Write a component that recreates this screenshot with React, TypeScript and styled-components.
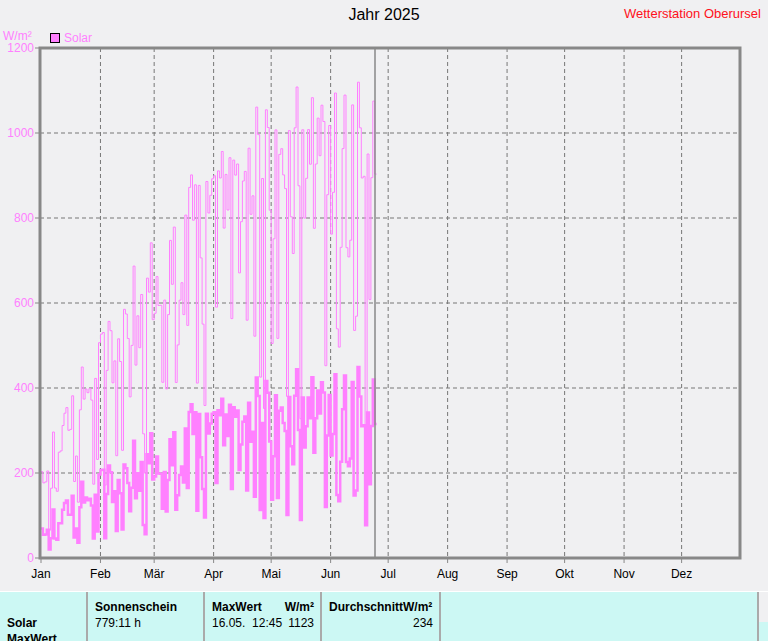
import React from 'react'
import styled, { createGlobalStyle } from 'styled-components'

const GlobalStyle = createGlobalStyle`
  html, body { margin: 0; padding: 0; background: #f0f0f2; }
  body { font-family: "Liberation Sans", Arial, sans-serif; }
`

const FONT = '"Liberation Sans", Arial, sans-serif'
const L = 40
const R = 740
const T = 48
const B = 558
const PX_DAY = 1.918
const yOf = (v: number) => B - (v / 1200) * (B - T)
const xOf = (d: number) => 41 + d * PX_DAY

const months = ['Jan', 'Feb', 'Mär', 'Apr', 'Mai', 'Jun', 'Jul', 'Aug', 'Sep', 'Okt', 'Nov', 'Dez']
const monthStart = [0, 31, 59, 90, 120, 151, 181, 212, 243, 273, 304, 334]

// deterministic pseudo random
function rng(seed: number) {
  let s = seed
  return () => {
    s = (s * 16807) % 2147483647
    return (s - 1) / 2147483646
  }
}

function buildSeries() {
  const r = rng(20250624)
  const max: number[] = []
  const avg: number[] = []
  for (let d = 0; d <= 174; d++) {
    const env = 260 + 860 * Math.sin(Math.min(1, d / 145) * Math.PI / 2)
    const cloud = r()
    const m = env * (0.12 + 0.88 * Math.pow(cloud, 0.4))
    max.push(Math.min(1123, m))
    const a = (env / 1120) * 450 * (0.15 + 0.85 * Math.pow(cloud, 0.7))
    avg.push(Math.max(18, Math.min(452, a)))
  }
  return { max, avg }
}

function stepPath(vals: number[]) {
  let p = ''
  vals.forEach((v, i) => {
    const x = xOf(i).toFixed(1)
    const y = yOf(v).toFixed(1)
    p += i === 0 ? `M${x} ${y}` : `L${x} ${y}`
    p += `L${xOf(i + 1).toFixed(1)} ${y}`
  })
  return p
}

const { max, avg } = buildSeries()

export default function App() {
  return (
    <Page>
      <GlobalStyle />
      <Header>
        <Title>Jahr 2025</Title>
        <Station>Wetterstation Oberursel</Station>
      </Header>
      <svg width={768} height={560} viewBox="0 30 768 560" style={{ display: 'block' }}>
        <text x={3} y={40} fill="#ff80ff" fontSize={12} fontFamily={FONT}>W/m²</text>
        <rect x={50.5} y={33.5} width={9} height={9} fill="#ff80ff" stroke="#000" strokeWidth={1} />
        <text x={64} y={42} fill="#ff80ff" fontSize={12} fontFamily={FONT}>Solar</text>
        {[200, 400, 600, 800, 1000].map(v => (
          <line key={v} x1={L} x2={R} y1={yOf(v)} y2={yOf(v)} stroke="#777" strokeDasharray="4 3" />
        ))}
        {monthStart.slice(1).map(d => (
          <line key={d} x1={xOf(d)} x2={xOf(d)} y1={T} y2={B} stroke="#777" strokeDasharray="4 3" />
        ))}
        {[0, 200, 400, 600, 800, 1000, 1200].map(v => (
          <g key={v}>
            <text x={34} y={yOf(v) + 4} textAnchor="end" fill="#ff80ff" fontSize={12} fontFamily={FONT}>{v}</text>
            <line x1={35} x2={40} y1={yOf(v)} y2={yOf(v)} stroke="#888" />
          </g>
        ))}
        {months.map((m, i) => (
          <g key={m}>
            <line x1={xOf(monthStart[i])} x2={xOf(monthStart[i])} y1={B} y2={B + 5} stroke="#888" />
            <text x={xOf(monthStart[i])} y={578} textAnchor="middle" fill="#000" fontSize={12} fontFamily={FONT}>{m}</text>
          </g>
        ))}
        <path d={stepPath(max)} fill="none" stroke="#ff80ff" strokeWidth={1} />
        <path d={stepPath(avg)} fill="none" stroke="#ff80ff" strokeWidth={2.5} />
        <line x1={375} x2={375} y1={T} y2={B} stroke="#888" strokeWidth={1.5} />
        <path d={`M${L} ${T}H${R}V${B}H${L}Z`} fill="none" stroke="#888" strokeWidth={3} />
      </svg>
      <Table>
        <Cell $w={88}>
          <Head>&nbsp;</Head>
          <Head>Solar</Head>
          <Head>MaxWert</Head>
        </Cell>
        <Cell $w={117}>
          <Head>Sonnenschein</Head>
          <div>779:11 h</div>
        </Cell>
        <Cell $w={117}>
          <Split><Head>MaxWert</Head><Head>W/m²</Head></Split>
          <Split><span>16.05.&nbsp;&nbsp;12:45</span><span>1123</span></Split>
        </Cell>
        <Cell $w={119}>
          <Split><Head>DurchschnittW/m²</Head></Split>
          <Split><span /><span>234</span></Split>
        </Cell>
        <Cell $w={318} />
        <Tail />
      </Table>
    </Page>
  )
}

const Page = styled.div`
  width: 768px;
  height: 641px;
  overflow: hidden;
`

const Header = styled.div`
  position: relative;
  height: 30px;
`

const Title = styled.div`
  text-align: center;
  font-size: 16px;
  padding-top: 6px;
  color: #000;
`

const Station = styled.div`
  position: absolute;
  right: 7px;
  top: 6px;
  color: #ff1020;
  font-size: 13px;
`

const Table = styled.div`
  display: flex;
  height: 50px;
  margin-top: 1px;
  border-top: 1px solid #fff;
`

const Cell = styled.div<{ $w: number }>`
  width: ${p => p.$w}px;
  box-sizing: border-box;
  background: #ccf8f4;
  border-right: 2px solid #aaa;
  padding: 7px 6px 0 7px;
  font-size: 12px;
  line-height: 16px;
  color: #000;
`

const Tail = styled.div`
  flex: 1;
  background: #ccf8f4;
  margin-top: 30px;
`

const Head = styled.div`
  font-weight: bold;
`

const Split = styled.div`
  display: flex;
  justify-content: space-between;
`
